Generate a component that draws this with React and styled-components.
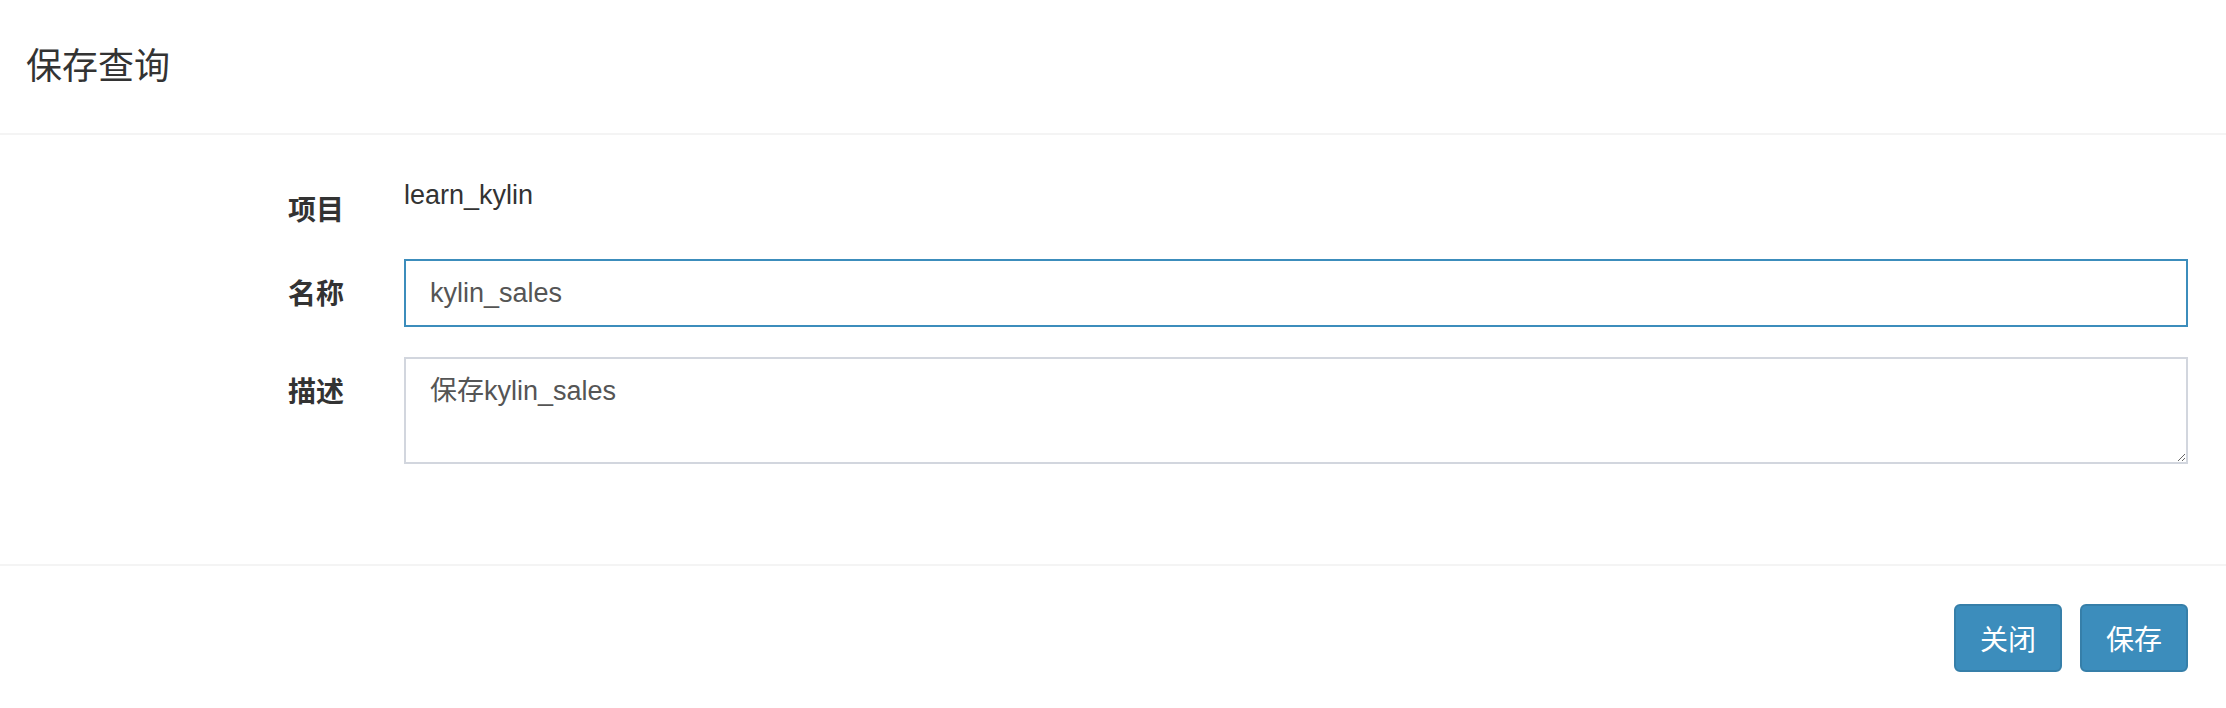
import React from 'react';
import styled, { createGlobalStyle } from 'styled-components';

const GlobalStyle = createGlobalStyle`
  html, body {
    margin: 0;
    padding: 0;
    background: #ffffff;
  }
  body {
    font-family: "Liberation Sans", "Noto Sans CJK SC", sans-serif;
    color: #333333;
  }
`;

const Modal = styled.div`
  width: 2226px;
  height: 708px;
  display: flex;
  flex-direction: column;
  background: #fff;
`;

const Header = styled.div`
  flex-shrink: 0;
  height: 133px;
  display: flex;
  align-items: center;
  padding-left: 26px;
  border-bottom: 2px solid #f4f4f4;
`;

const Title = styled.h4`
  margin: 0;
  font-size: 36px;
  font-weight: normal;
  line-height: 40px;
  color: #333;
`;

const Body = styled.div`
  padding: 40px 38px 100px 0;
`;

const FormGroup = styled.div`
  display: grid;
  grid-template-columns: 344px 1fr;
  column-gap: 60px;
  align-items: start;
  margin-bottom: 30px;
  &:last-child {
    margin-bottom: 0;
  }
`;

const Label = styled.label`
  text-align: right;
  font-size: 28px;
  font-weight: bold;
  line-height: 36px;
  padding-top: 18px;
  color: #333;
`;

const StaticText = styled.div`
  font-size: 27px;
  line-height: 40px;
  min-height: 54px;
  color: #333;
`;

const Input = styled.input`
  box-sizing: border-box;
  width: 100%;
  height: 68px;
  padding: 0 24px;
  border: 2px solid ${p => (p.$focused ? '#3c8dbc' : '#d2d6de')};
  border-radius: 0;
  outline: none;
  font-family: "Liberation Sans", "Noto Sans CJK SC", sans-serif;
  font-size: 27px;
  color: #555;
  background: #fff;
`;

const TextArea = styled.textarea`
  box-sizing: border-box;
  display: block;
  width: 100%;
  height: 107px;
  padding: 12px 24px;
  border: 2px solid #d2d6de;
  border-radius: 0;
  outline: none;
  font-family: "Liberation Sans", "Noto Sans CJK SC", sans-serif;
  font-size: 27px;
  line-height: 40px;
  color: #555;
  background: #fff;
  resize: vertical;
`;

const Footer = styled.div`
  flex-shrink: 0;
  border-top: 2px solid #f4f4f4;
  display: flex;
  justify-content: flex-end;
  gap: 18px;
  padding: 38px 38px 36px 0;
`;

const Button = styled.button`
  box-sizing: border-box;
  width: 108px;
  height: 68px;
  border-radius: 6px;
  border: 2px solid #367fa9;
  background: #3c8dbc;
  color: #fff;
  font-family: "Liberation Sans", "Noto Sans CJK SC", sans-serif;
  font-size: 28px;
  cursor: pointer;
`;

export default function App() {
  return (
    <Modal>
      <GlobalStyle />
      <Header>
        <Title>保存查询</Title>
      </Header>
      <Body>
        <FormGroup>
          <Label>项目</Label>
          <StaticText>learn_kylin</StaticText>
        </FormGroup>
        <FormGroup>
          <Label>名称</Label>
          <Input $focused defaultValue="kylin_sales" />
        </FormGroup>
        <FormGroup>
          <Label>描述</Label>
          <TextArea defaultValue="保存kylin_sales" />
        </FormGroup>
      </Body>
      <Footer>
        <Button>关闭</Button>
        <Button>保存</Button>
      </Footer>
    </Modal>
  );
}
